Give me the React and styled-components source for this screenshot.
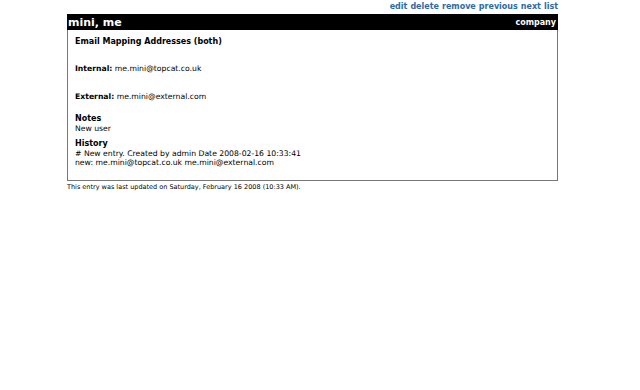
import React from "react";
import styled, { createGlobalStyle } from "styled-components";

const GlobalStyle = createGlobalStyle`
  body {
    margin: 0;
    background: #fff;
    font-family: "DejaVu Sans", sans-serif;
    color: #000;
  }
`;

const Page = styled.div`
  width: 491px;
  margin-left: 67px;
  padding-top: 2px;
`;

const Actions = styled.div`
  display: flex;
  justify-content: flex-end;
  gap: 3px;
  height: 12px;
  a {
    font-size: 8px;
    font-weight: bold;
    color: #2f6aa8;
    text-decoration: none;
  }
`;

const TitleBar = styled.div`
  background: #000;
  color: #fff;
  display: flex;
  justify-content: space-between;
  align-items: center;
  height: 16px;
  padding: 0 2px 0 1px;
`;

const Title = styled.span`
  font-size: 11px;
  font-weight: bold;
`;

const Category = styled.span`
  font-size: 8px;
  font-weight: bold;
`;

const Box = styled.div`
  border: 1px solid #777;
  border-top: none;
  padding: 7px 7px 12px;
  font-size: 7.7px;
`;

const Heading = styled.div`
  font-weight: bold;
  font-size: 8px;
  line-height: 10px;
  margin-top: ${(p) => p.top || 0}px;
`;

const Field = styled.div`
  margin-top: ${(p) => p.top}px;
  line-height: 10px;
  b {
    font-weight: bold;
  }
`;

const Line = styled.div`
  line-height: 9.5px;
`;

const Footer = styled.div`
  font-size: 6.5px;
  margin-top: 2px;
`;

export default function App() {
  return (
    <>
      <GlobalStyle />
      <Page>
        <Actions>
          <a href="#">edit</a>
          <a href="#">delete</a>
          <a href="#">remove</a>
          <a href="#">previous</a>
          <a href="#">next</a>
          <a href="#">list</a>
        </Actions>
        <TitleBar>
          <Title>mini, me</Title>
          <Category>company</Category>
        </TitleBar>
        <Box>
          <Heading>Email Mapping Addresses (both)</Heading>
          <Field top={17}>
            <b>Internal:</b> me.mini@topcat.co.uk
          </Field>
          <Field top={18}>
            <b>External:</b> me.mini@external.com
          </Field>
          <Heading top={12}>Notes</Heading>
          <Line>New user</Line>
          <Heading top={5}>History</Heading>
          <Line># New entry. Created by admin Date 2008-02-16 10:33:41</Line>
          <Line>new: me.mini@topcat.co.uk me.mini@external.com</Line>
        </Box>
        <Footer>
          This entry was last updated on Saturday, February 16 2008 (10:33 AM).
        </Footer>
      </Page>
    </>
  );
}
